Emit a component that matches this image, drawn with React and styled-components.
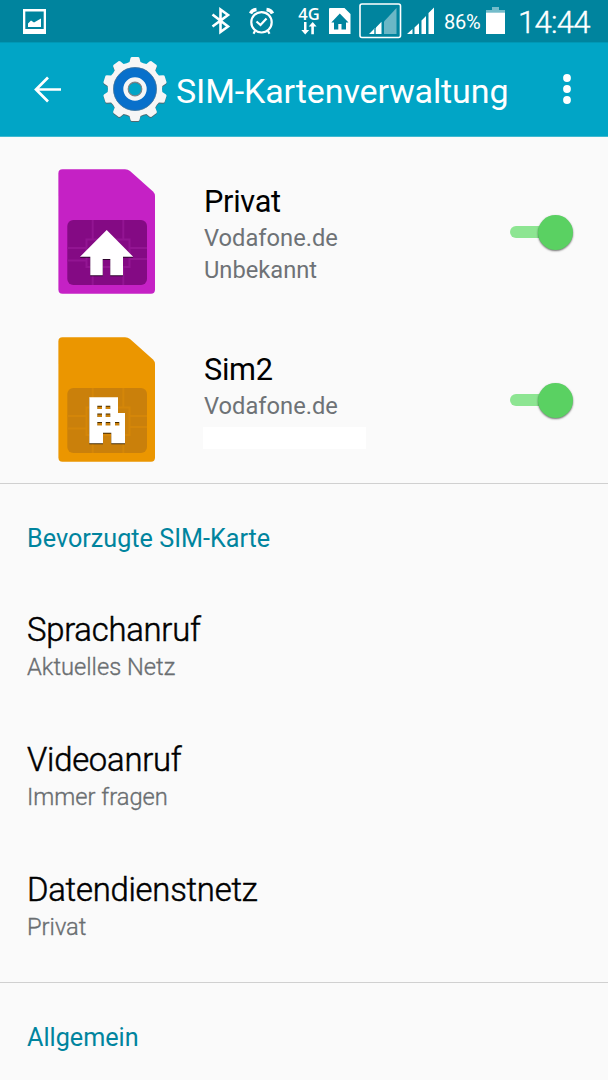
import { useState } from "react";
import styled, { createGlobalStyle } from "styled-components";

const GlobalStyle = createGlobalStyle`
  * {
    box-sizing: border-box;
  }
  body {
    margin: 0;
    background-color: #fafafa;
    font-family: Roboto, "Noto Sans", sans-serif;
  }
`;

const Screen = styled.div`
  width: 608px;
  height: 1080px;
  overflow: hidden;
  background-color: #fafafa;
`;

const StatusBar = styled.div`
  display: flex;
  align-items: flex-start;
  height: 42px;
  padding-left: 23px;
  background-color: #00849e;
  color: white;
`;

const StatusIcon = styled.svg`
  flex: none;
  display: block;
  margin-left: ${(props) => props.$gap || 0}px;
`;

const NetworkType = styled.div`
  display: flex;
  flex-direction: column;
  align-items: center;
  width: 24px;
  height: 42px;
  margin-left: 22px;
  padding-top: 5px;
  font-family: "Open Sans", sans-serif;
  font-size: 16.5px;
  font-weight: 600;
  line-height: 17px;
`;

const BatteryLevel = styled.span`
  width: 39px;
  margin-left: 9px;
  font-size: 20px;
  line-height: 45px;
  letter-spacing: -0.2px;
`;

const Clock = styled.span`
  margin-left: 12px;
  font-size: 31px;
  font-weight: 300;
  line-height: 45px;
  letter-spacing: -0.7px;
  white-space: nowrap;
  -webkit-text-stroke: 0.4px white;
`;

const AppBar = styled.header`
  display: flex;
  align-items: center;
  height: 95px;
  padding: 0 0 1px 33px;
  background-color: #01a5c6;
  border-top: 1px solid #0098b6;
  border-bottom: 1px solid #3fb9d0;
  color: white;
`;

const IconButton = styled.button`
  display: flex;
  padding: 0;
  border: none;
  background: none;
  color: inherit;
  cursor: pointer;
`;

const GearIcon = styled.svg`
  flex: none;
  margin-left: 39px;
`;

const AppTitle = styled.h1`
  width: 384px;
  margin: 3px 0 0 7px;
  font-size: 34px;
  font-weight: 400;
  line-height: 40px;
  letter-spacing: -0.12px;
  white-space: nowrap;
`;

const SimList = styled.section`
  height: 347px;
  padding-top: 11px;
  border-bottom: 1px solid #d0d0d0;
`;

const SimRow = styled.div`
  display: flex;
  height: 168px;
  padding: 21px 34px 0 58px;
`;

const SimText = styled.div`
  flex: 1;
  padding: 12.5px 0 0 49px;
`;

const SimName = styled.div`
  font-size: 30.7px;
  line-height: 40px;
  letter-spacing: -0.3px;
  color: #000;
`;

const SimDetail = styled.div`
  font-size: 23.7px;
  line-height: 32px;
  color: #6e7276;
`;

const HiddenNumber = styled.div`
  width: 163px;
  height: 22px;
  margin: 5px 0 0 -1px;
  background-color: #fff;
`;

const SwitchTrack = styled.button`
  display: flex;
  align-items: center;
  flex: none;
  width: 64px;
  height: 36px;
  margin-top: 45px;
  padding: 0;
  border: none;
  background: none;
  flex-direction: ${(props) => (props.$on ? "row" : "row-reverse")};
  cursor: pointer;
`;

const SwitchBar = styled.span`
  width: 45px;
  height: 12.5px;
  margin: 0 -17px 0 0;
  border-radius: 7px;
  background-color: ${(props) => (props.$on ? "#8de592" : "#c4c4c4")};
`;

const SwitchThumb = styled.span`
  position: relative;
  width: 35px;
  height: 35px;
  border-radius: 50%;
  background-color: ${(props) => (props.$on ? "#5ad162" : "#ececec")};
  box-shadow: 0 1px 2px rgba(0, 0, 0, 0.55);
`;

const Section = styled.section`
  height: ${(props) => props.$height}px;
  padding: 34px 27px 0;
  border-bottom: 1px solid #d0d0d0;
`;

const SectionTitle = styled.h2`
  margin: 0 0 47px;
  font-size: 25.2px;
  font-weight: 400;
  line-height: 41px;
  color: #00849e;
`;

const Preference = styled.div`
  height: 130px;
  padding-top: 4px;
`;

const PreferenceTitle = styled.div`
  font-size: 32.8px;
  font-weight: 300;
  line-height: 41px;
  letter-spacing: -0.23px;
  color: #000;
  -webkit-text-stroke: 0.5px #000;
`;

const PreferenceValue = styled.div`
  font-size: 23.7px;
  font-weight: 300;
  line-height: 32px;
  color: #6a6e71;
  -webkit-text-stroke: 0.35px #6a6e71;
`;

const GEAR_TEETH = 10;

// outline of the settings wheel, one trapezoid tooth every 36 degrees
const gearPath = () => {
  const profile = [
    [-18, 27],
    [-11.5, 27.5],
    [-8, 31.5],
    [-6, 32.3],
    [6, 32.3],
    [8, 31.5],
    [11.5, 27.5],
  ];
  const points = [];
  for (let i = 0; i < GEAR_TEETH; i++) {
    profile.forEach(([offset, radius]) => {
      const angle = ((i * 36 + offset - 90) * Math.PI) / 180;
      points.push(
        `${(34 + radius * Math.cos(angle)).toFixed(2)} ${(34 + radius * Math.sin(angle)).toFixed(2)}`
      );
    });
  }
  const hole = "M27 34a7 7 0 1 0 14 0a7 7 0 1 0 -14 0Z";
  return `M${points.join("L")}Z${hole}`;
};

const HOUSE = "M48.7 61L75.2 87.8H65V106.3H52.3V90H44.7V106.3H32.3V87.8H22Z";
const BUILDING =
  "M31.3 60.3H60V76H67V106.3H53.3V95.7H45V106.3H31.3Z" +
  "M39.3 68.7V72H44V68.7ZM47.7 68.7V72H52.3V68.7Z" +
  "M39.3 76.5V80H44V76.5ZM47.7 76.5V80H52.3V76.5Z" +
  "M39.3 85V88.4H44V85ZM47.7 85V88.4H52.3V85ZM57 85V88.4H61.3V85Z";

const SIMS = [
  {
    name: "Privat",
    provider: "Vodafone.de",
    number: "Unbekannt",
    color: "#c521c5",
    chip: "#840a84",
    line: "#921592",
    glyph: HOUSE,
  },
  {
    name: "Sim2",
    provider: "Vodafone.de",
    number: null,
    color: "#eb9600",
    chip: "#ca800b",
    line: "#d48609",
    glyph: BUILDING,
  },
];

const PREFERENCES = [
  { title: "Sprachanruf", value: "Aktuelles Netz" },
  { title: "Videoanruf", value: "Immer fragen" },
  { title: "Datendienstnetz", value: "Privat" },
];

function SimCard({ color, chip, line, glyph }) {
  return (
    <svg width="97" height="125" viewBox="0 0 97 125">
      <path
        d="M4.5 .3H67Q70 .3 72 2L95 22.5Q97 24.5 97 27V120.5Q97 124.7 93 124.7H4.5Q.4 124.7 .4 120.5V4.5Q.4 .3 4.5 .3Z"
        fill={color}
      />
      <rect x="9.3" y="51" width="79.7" height="65" rx="6" fill={chip} />
      <path
        d="M34.7 51V70.5M65.3 51V70.5M34.7 98V116M65.3 98V116M9.3 79H28M9.3 91.5H28M72 79H89M72 90H89M28.5 70.5H71.5V98H28.5Z"
        fill="none"
        stroke={line}
        strokeWidth="2"
      />
      <path d={glyph} transform="translate(0 1)" fill="#000" fillOpacity=".65" fillRule="evenodd" />
      <path d={glyph} fill="#fff" fillRule="evenodd" />
    </svg>
  );
}

function Switch() {
  const [on, setOn] = useState(true);
  return (
    <SwitchTrack $on={on} role="switch" aria-checked={on} onClick={() => setOn(!on)}>
      <SwitchBar $on={on} />
      <SwitchThumb $on={on} />
    </SwitchTrack>
  );
}

function Status() {
  return (
    <StatusBar>
      <StatusIcon width="23" height="42">
        <path
          fill="#fff"
          fillRule="evenodd"
          d="M0 9H23V34H0ZM2.3 11.5V29H20.7V11.5ZM5 27V23.5L8 20.5L11 22.5L18 18.5V27Z"
        />
      </StatusIcon>
      <StatusIcon $gap={165} width="20" height="42" fill="none" stroke="#fff" strokeWidth="2.6">
        <path d="M1.5 14.5L17 26.5L9.5 32V9.5L17 15L1.5 26.5" />
      </StatusIcon>
      <StatusIcon $gap={18} width="26" height="42" fill="none" stroke="#fff" strokeWidth="2.2">
        <circle cx="12.5" cy="22.3" r="10.2" />
        <path d="M7.5 21.5L11.5 25L17.5 18.5" />
        <path d="M1.5 13.5Q3 10 7.5 9.5M23.5 13.5Q22 10 17.5 9.5" strokeWidth="3.4" />
        <path d="M6 31L4.5 33.7M19 31L20.5 33.7" />
      </StatusIcon>
      <NetworkType>
        4G
        <svg width="16" height="13" fill="#fff">
          <path d="M3 0H5.5V8H8.2L4.2 12.5L.3 8H3ZM10.3 12.3V4.5H7.7L11.7 0L15.6 4.5H12.9V12.3Z" />
        </svg>
      </NetworkType>
      <StatusIcon $gap={8} width="22" height="42">
        <path
          fill="#fff"
          fillRule="evenodd"
          d="M1 8H15.5L21.5 14V34H0V9Q0 8 1 8ZM10.8 13.5L2.3 22.5H5V29.5H9.3V24H12.5V29.5H17V22.5H19.5Z"
        />
      </StatusIcon>
      <StatusIcon $gap={8} width="43" height="42">
        <rect x="1" y="4" width="40.5" height="33.5" rx="2" fill="none" stroke="#fff" strokeWidth="1.6" />
        <path d="M25 21.5L37.5 8V34H25Z" fill="#6bb7c6" />
        <path d="M10 34L15 29V34ZM17 27.5L22.5 21.8V34H17Z" fill="#fff" />
        <path d="M16 28V34" stroke="#9bcfd9" strokeWidth="1" />
      </StatusIcon>
      <StatusIcon $gap={5} width="28" height="42" fill="#fff">
        <path d="M0 34L5.5 29V34ZM7.5 27.5L12 23.2V34H7.5ZM14.5 20.5L19 16V34H14.5ZM21.5 13L27 7.5V34H21.5Z" />
      </StatusIcon>
      <BatteryLevel>86%</BatteryLevel>
      <StatusIcon $gap={3} width="20" height="42">
        <path d="M6 7H13V10H19V12.5H0V10H6Z" fill="#74bcca" />
        <path d="M0 12.5H19V34H0Z" fill="#fff" />
      </StatusIcon>
      <Clock>14:44</Clock>
    </StatusBar>
  );
}

function App() {
  return (
    <>
      <GlobalStyle />
      <Screen>
        <Status />
        <AppBar>
          <IconButton aria-label="Zurück">
            <svg width="29" height="28" fill="none" stroke="#fff" strokeWidth="2.7">
              <path d="M28 14.5H2.5M15 2.5L3 14.5L15 26.5" />
            </svg>
          </IconButton>
          <GearIcon width="68" height="68">
            <path d={gearPath()} transform="translate(0 1)" fill="#4e6a72" fillRule="evenodd" />
            <path d={gearPath()} fill="#f6f6f6" fillRule="evenodd" />
            <circle cx="34" cy="34" r="16.7" fill="none" stroke="#0870cb" strokeWidth="10" />
            <circle cx="34" cy="34" r="21.5" fill="none" stroke="#4c7592" strokeWidth=".7" />
            <circle cx="34" cy="34" r="6.8" fill="none" stroke="#7c8589" strokeWidth="1.2" />
          </GearIcon>
          <AppTitle>SIM-Kartenverwaltung</AppTitle>
          <IconButton aria-label="Mehr">
            <svg width="14" height="32" fill="#fff">
              <circle cx="7" cy="5" r="3.9" />
              <circle cx="7" cy="16" r="3.9" />
              <circle cx="7" cy="27" r="3.9" />
            </svg>
          </IconButton>
        </AppBar>
        <SimList>
          {SIMS.map((sim) => (
            <SimRow key={sim.name}>
              <SimCard {...sim} />
              <SimText>
                <SimName>{sim.name}</SimName>
                <SimDetail>{sim.provider}</SimDetail>
                {sim.number ? <SimDetail>{sim.number}</SimDetail> : <HiddenNumber />}
              </SimText>
              <Switch />
            </SimRow>
          ))}
        </SimList>
        <Section $height={499}>
          <SectionTitle>Bevorzugte SIM-Karte</SectionTitle>
          {PREFERENCES.map((pref) => (
            <Preference key={pref.title}>
              <PreferenceTitle>{pref.title}</PreferenceTitle>
              <PreferenceValue>{pref.value}</PreferenceValue>
            </Preference>
          ))}
        </Section>
        <Section $height={130}>
          <SectionTitle>Allgemein</SectionTitle>
        </Section>
      </Screen>
    </>
  );
}

export default App;
